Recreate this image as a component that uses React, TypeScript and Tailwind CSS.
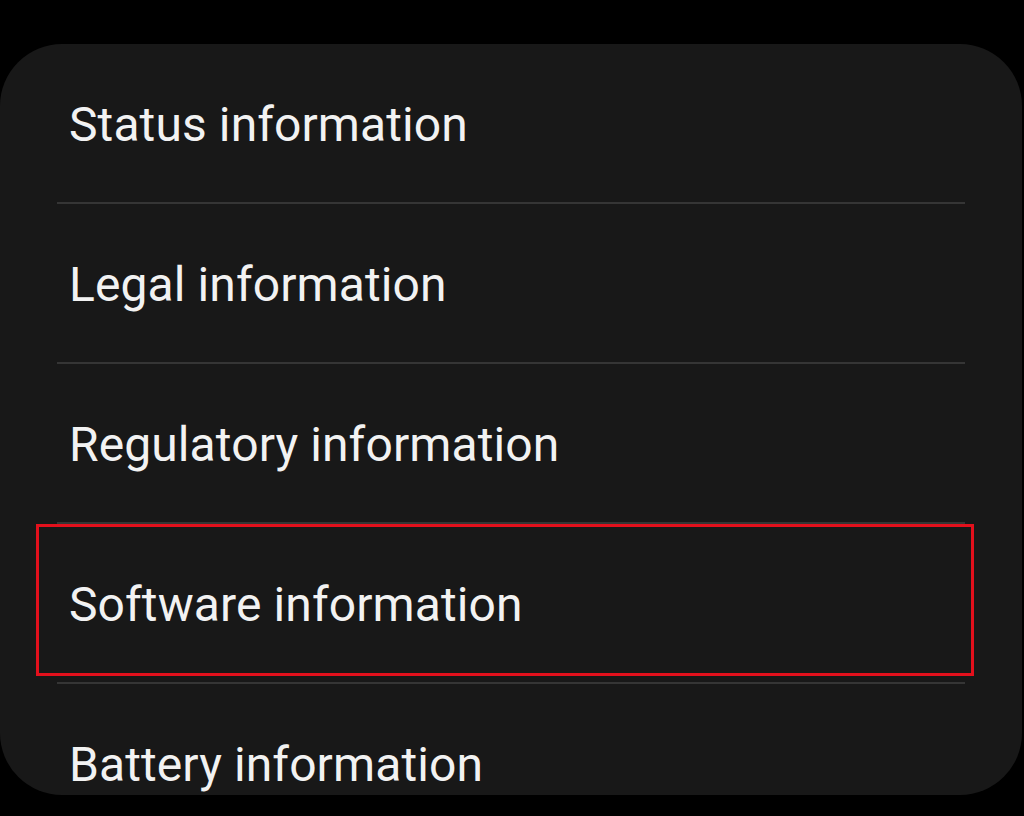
import React from "react";

const rows = [
  "Status information",
  "Legal information",
  "Regulatory information",
  "Software information",
  "Battery information",
];

export default function App() {
  return (
    <div className="w-[1024px] h-[816px] bg-black overflow-hidden pt-[44px]" style={{ fontFamily: "Roboto, 'Noto Sans', sans-serif" }}>
      <div className="relative w-[1022px] h-[751px] bg-[#181818] rounded-[62px]">
        {rows.map((r, i) => (
          <div key={r}>
            {i > 0 && <div className="mx-[57px] h-[2px] bg-[#353535]" />}
            <div className={`${i === rows.length - 1 ? "h-[108px]" : "h-[158px]"} pl-[69px] pt-[57px] text-[48px] leading-[48px] text-[#f2f2f2] tracking-[0.1px]`}>
              {r}
            </div>
          </div>
        ))}
        <div className="absolute left-[36px] top-[480px] w-[938px] h-[152px] border-[3px] border-[#e3101c]" />
      </div>
    </div>
  );
}
